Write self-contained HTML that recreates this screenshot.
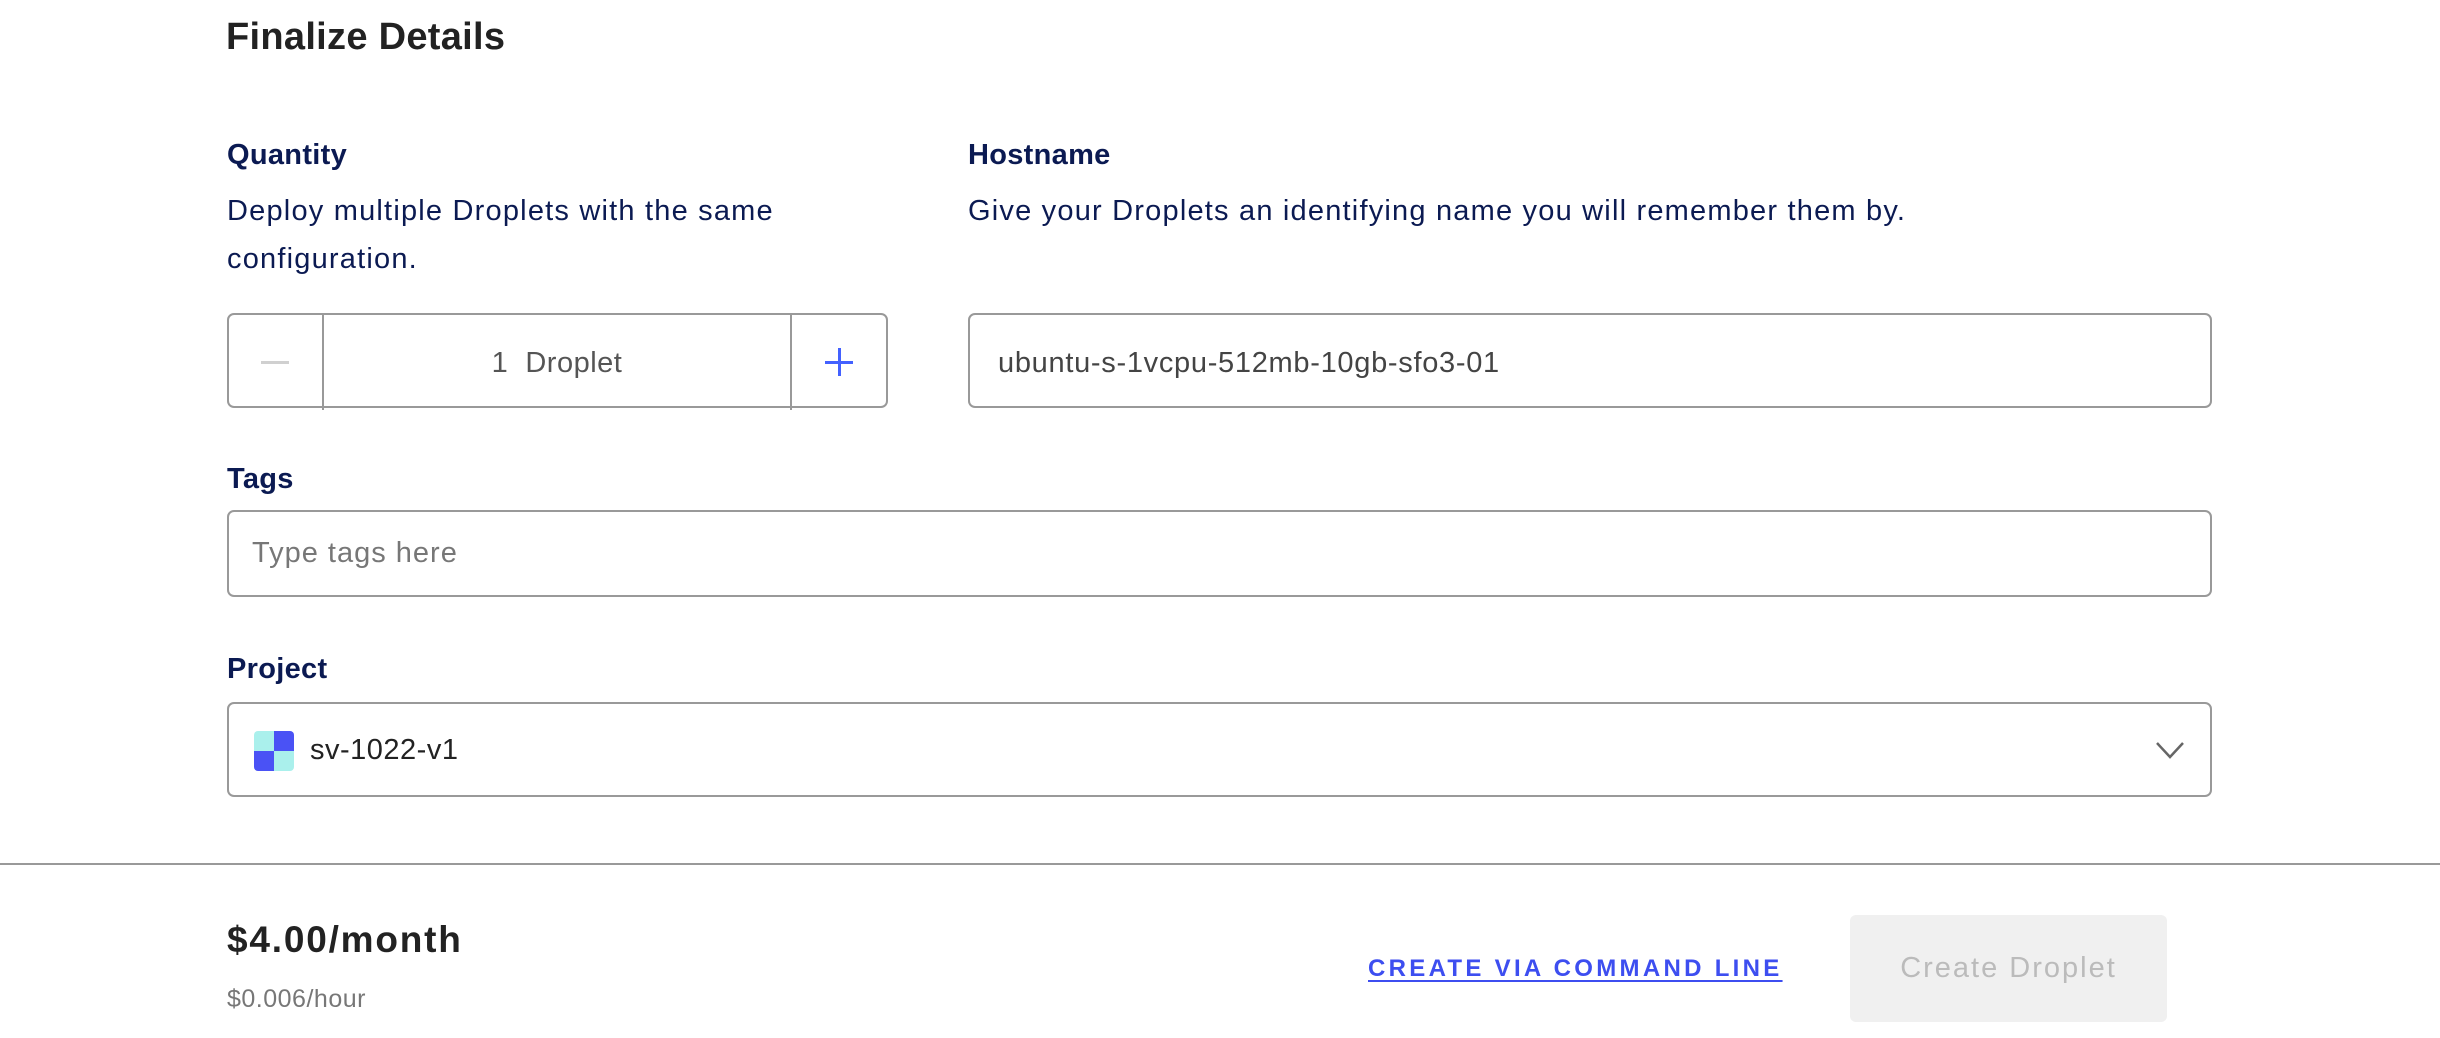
<!DOCTYPE html>
<html><head><meta charset="utf-8"><style>
*{margin:0;padding:0;box-sizing:border-box}
body{width:2440px;height:1038px;background:#fff;position:relative;overflow:hidden;font-family:"Liberation Sans",sans-serif}
.a{position:absolute;white-space:nowrap}
.lbl{font-size:29px;font-weight:bold;color:#0b1a52;line-height:29px}
.desc{font-size:29px;color:#0b1a52;line-height:48px;letter-spacing:1.2px}
.box{position:absolute;border:2px solid #999;border-radius:7px;background:#fff}
</style></head><body>
<div class="a" style="left:226px;top:18px;font-size:38px;font-weight:bold;line-height:38px;color:#222;letter-spacing:0.3px">Finalize Details</div>

<div class="a lbl" style="left:227px;top:141px;letter-spacing:0.3px">Quantity</div>
<div class="a desc" style="left:227px;top:187px">Deploy multiple Droplets with the same<br>configuration.</div>

<div class="a lbl" style="left:968px;top:141px;letter-spacing:0.3px">Hostname</div>
<div class="a desc" style="left:968px;top:187px">Give your Droplets an identifying name you will remember them by.</div>

<div class="box" style="left:227px;top:313px;width:661px;height:95px"></div>
<div class="a" style="left:322px;top:313px;width:2px;height:97px;background:#999"></div>
<div class="a" style="left:790px;top:313px;width:2px;height:97px;background:#999"></div>
<div class="a" style="left:261px;top:361px;width:28px;height:3px;background:#d0d0d0"></div>
<div class="a" style="left:825px;top:361px;width:28px;height:3px;background:#4361ff"></div>
<div class="a" style="left:838px;top:348px;width:3px;height:28px;background:#4361ff"></div>
<div class="a" style="left:324px;width:466px;top:349px;text-align:center;font-size:29px;line-height:29px;color:#555;letter-spacing:0.5px">1&nbsp; Droplet</div>

<div class="box" style="left:968px;top:313px;width:1244px;height:95px"></div>
<div class="a" style="left:998px;top:349px;font-size:29px;line-height:29px;color:#444;letter-spacing:0.7px">ubuntu-s-1vcpu-512mb-10gb-sfo3-01</div>

<div class="a lbl" style="left:227px;top:465px;letter-spacing:0.3px">Tags</div>
<div class="box" style="left:227px;top:510px;width:1985px;height:87px"></div>
<div class="a" style="left:252px;top:539px;font-size:29px;line-height:29px;color:#777;letter-spacing:1px">Type tags here</div>

<div class="a lbl" style="left:227px;top:655px;letter-spacing:0.3px">Project</div>
<div class="box" style="left:227px;top:702px;width:1985px;height:95px"></div>
<div class="a" style="left:254px;top:731px;width:40px;height:40px;border-radius:4px;overflow:hidden">
 <div class="a" style="left:0;top:0;width:20px;height:20px;background:#aaf0ec"></div>
 <div class="a" style="left:20px;top:0;width:20px;height:20px;background:#4a52f5"></div>
 <div class="a" style="left:0;top:20px;width:20px;height:20px;background:#4a52f5"></div>
 <div class="a" style="left:20px;top:20px;width:20px;height:20px;background:#aaf0ec"></div>
</div>
<div class="a" style="left:310px;top:736px;font-size:29px;line-height:29px;color:#222;letter-spacing:0.5px">sv-1022-v1</div>
<svg class="a" style="left:2155px;top:740px" width="30" height="20" viewBox="0 0 30 20"><path d="M2 3 L15 17 L28 3" fill="none" stroke="#666" stroke-width="2.5"/></svg>

<div class="a" style="left:0;top:863px;width:2440px;height:2px;background:#999"></div>

<div class="a" style="left:227px;top:921px;font-size:37px;font-weight:bold;line-height:37px;color:#222;letter-spacing:1.8px">$4.00/month</div>
<div class="a" style="left:227px;top:987px;font-size:25px;line-height:25px;color:#777;letter-spacing:0.5px">$0.006/hour</div>

<div class="a" style="left:1368px;top:957px;font-size:24px;font-weight:bold;line-height:24px;color:#3d4ef0;text-decoration:underline;text-underline-offset:4px;letter-spacing:3.3px">CREATE VIA COMMAND LINE</div>

<div class="a" style="left:1850px;top:915px;width:317px;height:107px;background:#f0f0f0;border-radius:6px;text-align:center;line-height:107px;font-size:29px;color:#bbb;letter-spacing:2px">Create Droplet</div>
</body></html>
